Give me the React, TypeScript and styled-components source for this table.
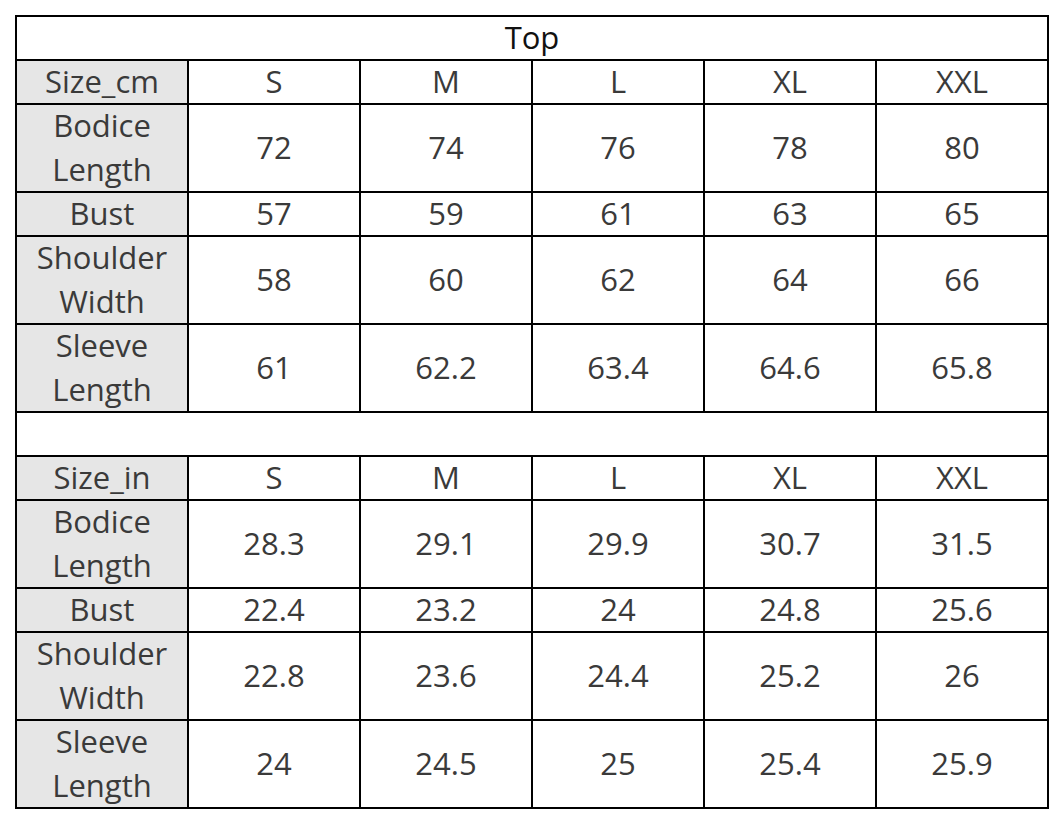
import React from "react";
import styled, { createGlobalStyle } from "styled-components";

const Global = createGlobalStyle`
  html, body { margin: 0; padding: 0; background: #ffffff; }
  body { padding: 15px; font-family: "Open Sans", "Noto Sans CJK SC", sans-serif; }
`;

const Grid = styled.div`
  display: grid;
  grid-template-columns: repeat(6, 170px);
  grid-auto-rows: 42px;
  gap: 2px;
  padding: 2px;
  background: #000;
  width: max-content;
`;

const Cell = styled.div<{ $head?: boolean; $tall?: boolean; $full?: boolean; $title?: boolean }>`
  background: ${(p) => (p.$head ? "#e6e6e6" : "#ffffff")};
  grid-row: ${(p) => (p.$tall ? "span 2" : "auto")};
  grid-column: ${(p) => (p.$full ? "1 / -1" : "auto")};
  display: flex;
  align-items: center;
  justify-content: center;
  text-align: center;
  font-size: 31px;
  line-height: 44px;
  padding-bottom: 2px;
  box-sizing: border-box;
  color: ${(p) => (p.$title ? "#111" : "#3a3a3a")};
`;

type Row = { label: string; values: string[]; tall?: boolean };

const sizes = ["S", "M", "L", "XL", "XXL"];

const cm: Row[] = [
  { label: "Bodice Length", values: ["72", "74", "76", "78", "80"], tall: true },
  { label: "Bust", values: ["57", "59", "61", "63", "65"] },
  { label: "Shoulder Width", values: ["58", "60", "62", "64", "66"], tall: true },
  { label: "Sleeve Length", values: ["61", "62.2", "63.4", "64.6", "65.8"], tall: true },
];

const inch: Row[] = [
  { label: "Bodice Length", values: ["28.3", "29.1", "29.9", "30.7", "31.5"], tall: true },
  { label: "Bust", values: ["22.4", "23.2", "24", "24.8", "25.6"] },
  { label: "Shoulder Width", values: ["22.8", "23.6", "24.4", "25.2", "26"], tall: true },
  { label: "Sleeve Length", values: ["24", "24.5", "25", "25.4", "25.9"], tall: true },
];

function Section({ unit, rows }: { unit: string; rows: Row[] }) {
  return (
    <>
      <Cell $head>{unit}</Cell>
      {sizes.map((s) => (
        <Cell key={unit + s}>{s}</Cell>
      ))}
      {rows.map((r) => (
        <React.Fragment key={unit + r.label}>
          <Cell $head $tall={r.tall}>
            {r.tall ? (
              <span>
                {r.label.split(" ")[0]}
                <br />
                {r.label.split(" ")[1]}
              </span>
            ) : (
              r.label
            )}
          </Cell>
          {r.values.map((v, i) => (
            <Cell key={i} $tall={r.tall}>
              {v}
            </Cell>
          ))}
        </React.Fragment>
      ))}
    </>
  );
}

export default function App() {
  return (
    <>
      <Global />
      <Grid>
        <Cell $full $title>Top</Cell>
        <Section unit="Size_cm" rows={cm} />
        <Cell $full />
        <Section unit="Size_in" rows={inch} />
      </Grid>
    </>
  );
}
